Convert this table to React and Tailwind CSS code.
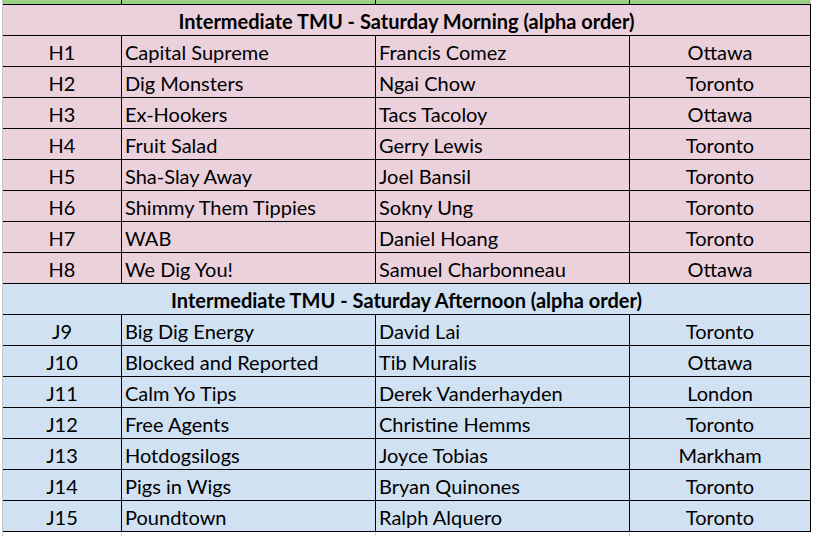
const morning = [
    ['H1', 'Capital Supreme', 'Francis Comez', 'Ottawa'],
    ['H2', 'Dig Monsters', 'Ngai Chow', 'Toronto'],
    ['H3', 'Ex-Hookers', 'Tacs Tacoloy', 'Ottawa'],
    ['H4', 'Fruit Salad', 'Gerry Lewis', 'Toronto'],
    ['H5', 'Sha-Slay Away', 'Joel Bansil', 'Toronto'],
    ['H6', 'Shimmy Them Tippies', 'Sokny Ung', 'Toronto'],
    ['H7', 'WAB', 'Daniel Hoang', 'Toronto'],
    ['H8', 'We Dig You!', 'Samuel Charbonneau', 'Ottawa'],
]

const afternoon = [
    ['J9', 'Big Dig Energy', 'David Lai', 'Toronto'],
    ['J10', 'Blocked and Reported', 'Tib Muralis', 'Ottawa'],
    ['J11', 'Calm Yo Tips', 'Derek Vanderhayden', 'London'],
    ['J12', 'Free Agents', 'Christine Hemms', 'Toronto'],
    ['J13', 'Hotdogsilogs', 'Joyce Tobias', 'Markham'],
    ['J14', 'Pigs in Wigs', 'Bryan Quinones', 'Toronto'],
    ['J15', 'Poundtown', 'Ralph Alquero', 'Toronto'],
]

const cell = 'flex h-full items-center border-r border-black pt-[1px]'

function Row({ row, bg }) {
    const [code, team, captain, city] = row
    return (
        <div className={`flex h-[31px] border-b border-black ${bg}`}>
            <div className={`${cell} w-[119px] justify-center`}>{code}</div>
            <div className={`${cell} w-[254px] pl-[3px]`}>{team}</div>
            <div className={`${cell} w-[254px] pl-[3px]`}>{captain}</div>
            <div className={`${cell} w-[181px] justify-center`}>{city}</div>
        </div>
    )
}

function Title({ text, bg }) {
    return (
        <div className={`flex h-[31px] items-center justify-center border-b border-r border-black pt-[1px] font-bold ${bg}`}>
            {text}
        </div>
    )
}

export default function App() {
    return (
        <div
            className="h-[536px] w-[813px] overflow-hidden bg-white text-[20px] leading-none text-black"
            style={{ fontFamily: 'Lato, "Liberation Sans", sans-serif' }}
        >
            <div className="ml-[2px] w-[809px] border-l border-[#c8c8c8]">
                {/* green strip left over from the row above */}
                <div className="flex h-[5px] border-b border-black bg-[#9bcf84]">
                    <div className="w-[119px] border-r border-black" />
                    <div className="w-[254px] border-r border-black" />
                    <div className="w-[254px] border-r border-black" />
                    <div className="w-[181px] border-r border-[#c8c8c8]" />
                </div>
                <Title text="Intermediate TMU - Saturday Morning (alpha order)" bg="bg-[#ead1dc]" />
                {morning.map((r) => (
                    <Row key={r[0]} row={r} bg="bg-[#ead1dc]" />
                ))}
                <Title text="Intermediate TMU - Saturday Afternoon (alpha order)" bg="bg-[#d0e1f2]" />
                {afternoon.map((r) => (
                    <Row key={r[0]} row={r} bg="bg-[#d0e1f2]" />
                ))}
                <div className="flex h-[4px]">
                    <div className="w-[119px] border-r border-[#d8d8d8]" />
                    <div className="w-[254px] border-r border-[#d8d8d8]" />
                    <div className="w-[254px] border-r border-[#d8d8d8]" />
                </div>
            </div>
        </div>
    )
}
